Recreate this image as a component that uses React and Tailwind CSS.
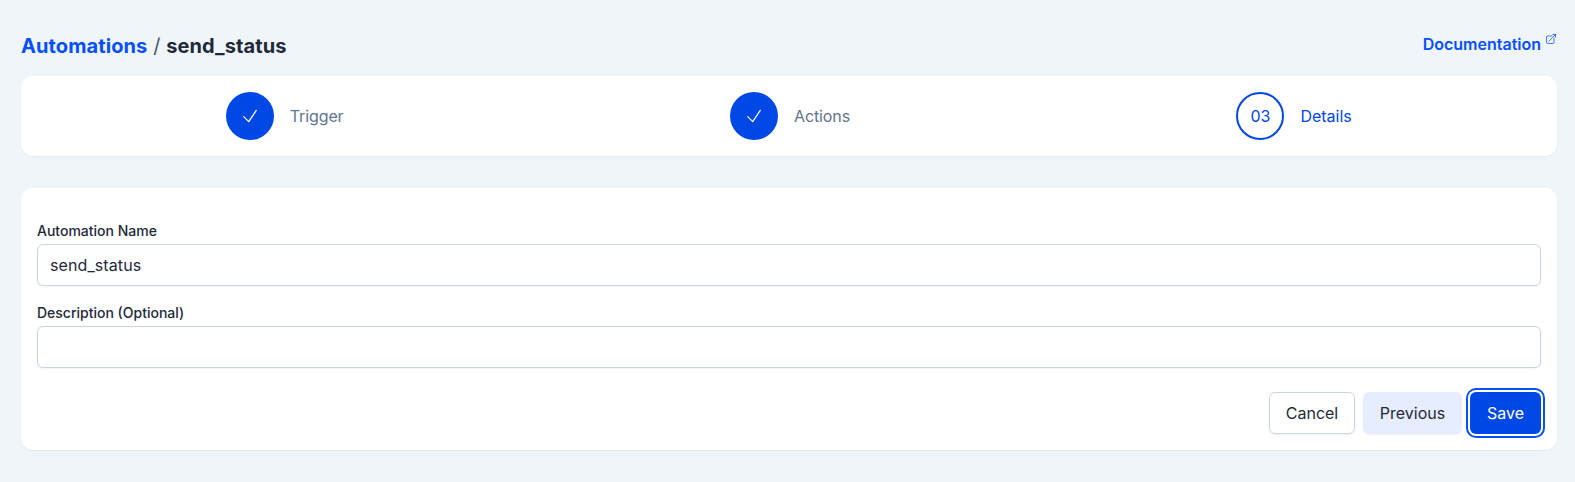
function CheckIcon() {
  return (
    <svg className="size-5 text-white" viewBox="0 0 24 24" fill="none" stroke="currentColor" strokeWidth="1.5" strokeLinecap="round" strokeLinejoin="round" aria-hidden="true">
      <path d="M4.5 12.75l6 6 9-13.5" />
    </svg>
  );
}

function ExternalIcon() {
  return (
    <svg className="mt-px size-3" viewBox="0 0 24 24" fill="none" stroke="currentColor" strokeWidth="1.5" strokeLinecap="round" strokeLinejoin="round" aria-hidden="true">
      <path d="M13.5 6H5.25A2.25 2.25 0 003 8.25v10.5A2.25 2.25 0 005.25 21h10.5A2.25 2.25 0 0018 18.75V10.5m-10.5 6L21 3m0 0h-5.25M21 3v5.25" />
    </svg>
  );
}

function Step({ label, number, done }) {
  return (
    <li className="flex items-center gap-4">
      {done ? (
        <span className="flex size-12 items-center justify-center rounded-full bg-[#0048e5]">
          <CheckIcon />
        </span>
      ) : (
        <span className="flex size-12 items-center justify-center rounded-full border-2 border-[#0048e5] text-[#0048e5]">{number}</span>
      )}
      <span className={done ? "tracking-[-0.1px] text-slate-500" : "text-[#0048e5]"}>{label}</span>
    </li>
  );
}

function Field({ label, id, value }) {
  return (
    <div>
      <label htmlFor={id} className="block pt-px text-sm leading-5 font-medium text-gray-800">{label}</label>
      <input id={id} defaultValue={value} className="mt-[3px] block h-[42px] w-full rounded-md border border-[#cbd5e1] bg-white px-3 text-base tracking-[0.1px] text-gray-800 shadow-[0_1px_2px_0_rgba(0,0,0,0.05)] outline-none" />
    </div>
  );
}

export default function App() {
  return (
    <div className="min-h-screen bg-[#eff5f9] pt-8 pr-[18px] pl-[21px] font-['Inter',sans-serif] text-base text-gray-800">
      <header className="flex h-11 items-start justify-between">
        <h1 className="text-xl leading-7 font-bold tracking-[0.1px]">
          <a href="#" className="text-[#054fff]">Automations</a>
          <span className="font-normal text-gray-600"> / </span>
          <span>send_status</span>
        </h1>
        <a href="#" className="flex items-start gap-1 font-semibold text-[#054fff]">
          Documentation
          <ExternalIcon />
        </a>
      </header>
      <ol className="flex h-20 items-center justify-around rounded-xl bg-white pr-3 pl-[11.5px] shadow-[0_1px_2px_0_rgba(0,0,0,0.05)]">
        <Step label="Trigger" done />
        <Step label="Actions" done />
        <Step label="Details" number="03" />
      </ol>
      <form className="mt-8 flex h-[262px] flex-col gap-4 rounded-xl bg-white px-4 pt-8 shadow-[0_1px_2px_0_rgba(0,0,0,0.05)]">
        <Field id="name" label="Automation Name" value="send_status" />
        <Field id="description" label="Description (Optional)" value="" />
        <div className="mt-2 flex justify-end gap-2">
          <button type="button" className="h-[42px] w-[86px] rounded-md border border-[#cbd5e1] bg-white shadow-[0_1px_2px_0_rgba(0,0,0,0.05)]">Cancel</button>
          <button type="button" className="h-[42px] w-[99px] rounded-md border border-transparent bg-[#e6edff] shadow-[0_1px_2px_0_rgba(0,0,0,0.05)]">Previous</button>
          <button type="button" className="h-[42px] w-[71px] rounded-md border border-transparent bg-[#0048e5] text-white ring-2 ring-[#054fff] ring-offset-2 ring-offset-white">Save</button>
        </div>
      </form>
    </div>
  );
}
